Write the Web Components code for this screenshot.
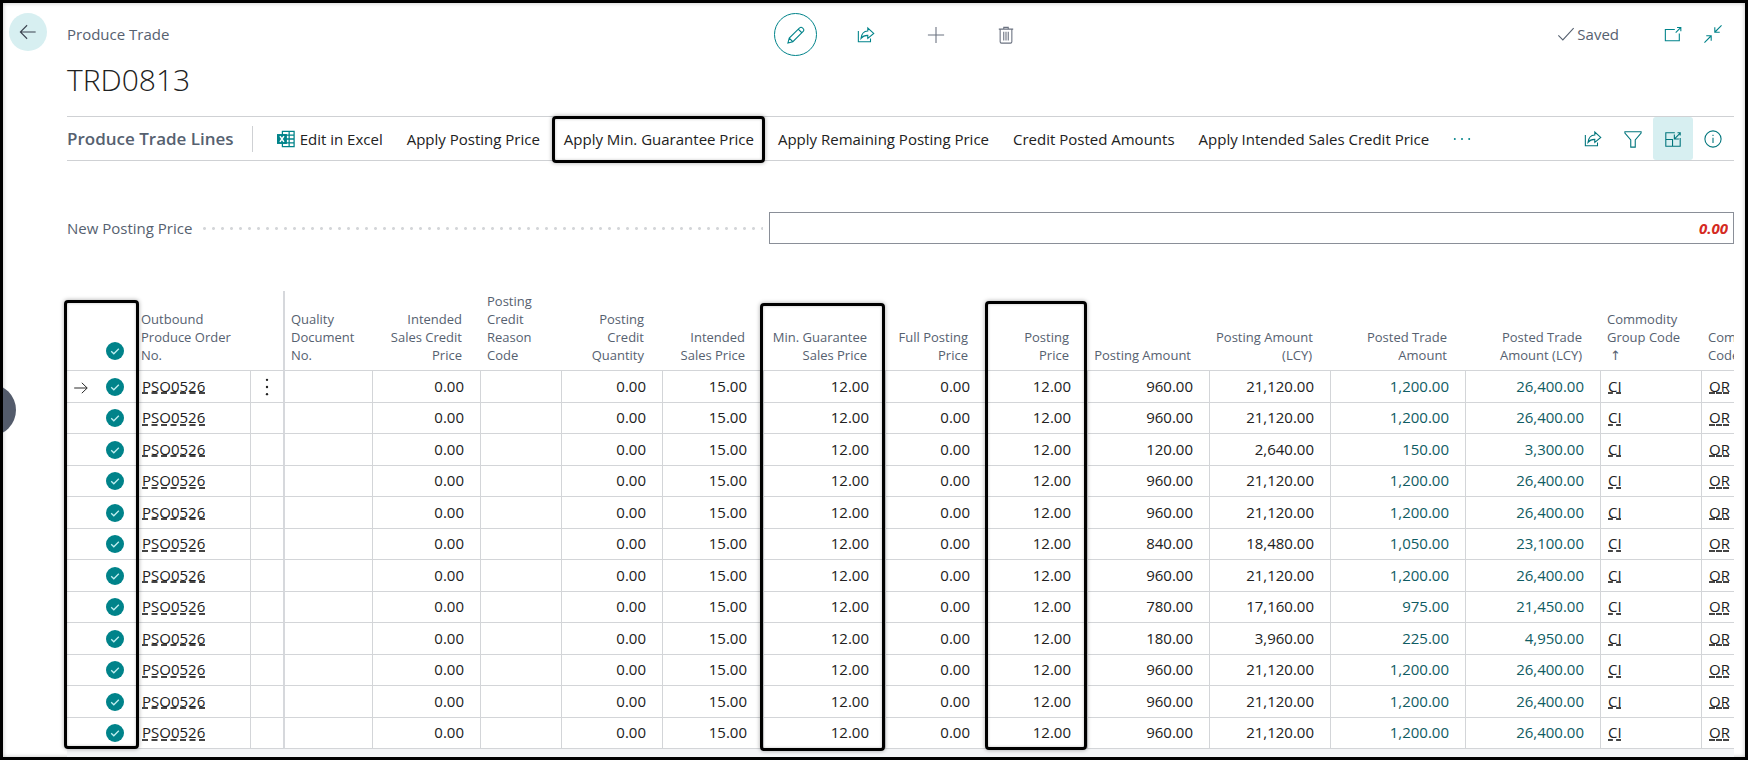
<!DOCTYPE html>
<html lang="en">
<head>
<meta charset="utf-8">
<meta name="viewport" content="width=device-width, initial-scale=1">
<title>Produce Trade - TRD0813</title>
<style>
  body { margin: 0; background: #fff; }
</style>
</head>
<body>
<trade-page>
  <page-header slot="header" caption="Produce Trade" record="TRD0813"></page-header>
  <lines-toolbar>Produce Trade Lines</lines-toolbar>
  <price-field value="0.00">New Posting Price</price-field>
  <lines-grid></lines-grid>
</trade-page>

<script>
const define = (name, html, setup) => {
  const template = document.createElement('template');
  template.innerHTML = html;
  customElements.define(name, class extends HTMLElement {
    connectedCallback() {
      if (this.shadowRoot) return;
      const root = this.attachShadow({ mode: 'open' });
      root.append(template.content.cloneNode(true));
      if (setup) setup.call(this, root);
    }
  });
};

const ICONS = {
  back: '<path d="M18.500 10H1.500M9 2.500 1.500 10 9 17.500"/>',
  pencil: '<path d="M1 19l1.500-5.500L14 2a2.200 2.200 0 0 1 3.200 0l.8.8a2.200 2.200 0 0 1 0 3.200L6.500 17.500zM2.500 13.500l4 4M12.500 3.500l4 4"/>',
  share: '<path d="M1.500 5.500v12h13.500v-3.500M4.500 13.800C5 8.500 8 5.800 12 5.600V2.200l6.600 6-6.600 5.600v-3.400C8.800 10.300 6.400 11.300 4.500 13.800z"/>',
  plus: '<path d="M10 1v18M1 10h18"/>',
  trash: '<path d="M2 3.500h16M7.500 3.300V1.500h5v1.800M3.500 3.500v14q0 1.500 1.500 1.500h10q1.500 0 1.500-1.500v-14M7.500 6.500v9.500M10 6.500v9.500M12.500 6.500v9.500"/>',
  check: '<path d="M1.500 11.500l5 5L18.500 3.500"/>',
  popout: '<path d="M12 5H1.500v12.500h15.500V9.500M13 8.500l5.500-5.500M14.500 2.800h4.200v4.200"/>',
  shrink: '<path d="M19.500.5l-7 7M12 2.500V8h5.500M.5 19.500l7-7M2.500 12H8v5.500"/>',
  filter: '<path d="M1 2h18v1.500l-6.500 7.500v8h-5v-8L1 3.500z"/>',
  focus: '<path d="M12 3H2v15h16V9M2 10.500h7.500v7.500M18.500 3l-6.500 6.500M11.500 5v5h5M15 3h3v3"/>',
  info: '<circle cx="10" cy="10" r="9"/><path d="M10 8.500v6M10 5.200v1.500"/>',
  arrow: '<path d="M1.500 10h16M11 3.500l6.800 6.500L11 16.500"/>',
  more: '<g fill="currentColor" stroke="none"><circle cx="2" cy="10" r="1.100"/><circle cx="10" cy="10" r="1.100"/><circle cx="18" cy="10" r="1.100"/></g>',
  dots: '<g fill="currentColor" stroke="none"><circle cx="10" cy="2" r="1.300"/><circle cx="10" cy="10" r="1.300"/><circle cx="10" cy="18" r="1.300"/></g>',
  excel: '<path d="M6 1.500h13v17H6zM6 5.800h13M6 10h13M6 14.200h13M13.500 1.500v17" stroke-width="1.400"/><path d="M0 4.500h11v11H0z" fill="currentColor" stroke="none"/><path d="M3.300 6.800l4.400 6.400M7.700 6.800l-4.400 6.400" stroke="#fff" stroke-width="1.700"/>'
};

define('line-icon', `
  <style>
    :host { display: inline-flex; flex: none; width: 18px; height: 18px; }
    svg { width: 100%; height: 100%; fill: none; stroke: currentColor; stroke-width: 1.200; overflow: visible; }
  </style>
  <svg viewBox="0 0 20 20" aria-hidden="true"></svg>`,
  function (root) {
    root.querySelector('svg').innerHTML = ICONS[this.getAttribute('name')];
  });

/* Heavy black outline that calls out a part of the page. */
define('call-out', `
  <style>
    :host {
      position: absolute; box-sizing: border-box; pointer-events: none;
      border: 3px solid #000; border-radius: 4px;
      box-shadow: 0 0 4px rgba(0,0,0,.35), inset 0 0 3px rgba(0,0,0,.25);
    }
  </style>`);

define('trade-page', `
  <style>
    :host {
      display: flex; flex-direction: column; position: relative; box-sizing: border-box;
      min-height: 100vh; overflow: hidden; border: 3px solid #000;
      padding: 10px 11px 0 6px; background: #fff;
      box-shadow: inset 0 0 4px rgba(0,0,0,.25);
      font: 15px/20px "Open Sans", "Noto Sans", sans-serif; color: #212121;
    }
    .body { display: flex; flex-direction: column; flex: 1; margin-left: 58px; min-width: 0; }
    .tab {
      position: absolute; left: -39px; top: 381px; width: 52px; height: 52px;
      border: 0; border-radius: 50%; background: #535b6b; padding: 0;
    }
  </style>
  <slot name="header"></slot>
  <main class="body"><slot></slot></main>
  <button class="tab" aria-label="Expand pane"></button>`);

define('page-header', `
  <style>
    :host { display: grid; grid-template-columns: 58px 1fr auto 1fr; height: 103px; color: #566170; }
    button { display: flex; align-items: center; justify-content: center; padding: 0; border: 0; background: none; color: #00838a; }
    .back { width: 38px; height: 38px; border-radius: 50%; background: #d7eff1; color: #3b4350; }
    .caption { padding-top: 11px; }
    h1 { margin: 16px 0 0; font-size: 30px; line-height: 40px; font-weight: 300; color: #212121; }
    .tools { display: flex; gap: 27px; height: 43px; }
    .tools button { width: 43px; height: 43px; }
    .tools button:first-child { border: 1px solid #00838a; border-radius: 50%; }
    .tools button.grey { color: #6b7280; }
    .state { display: flex; justify-content: flex-end; align-items: center; height: 42px; padding-right: 1px; }
    .saved { display: flex; align-items: center; gap: 2px; margin-right: 34px; }
    .state button { width: 40px; height: 40px; }
  </style>
  <button class="back" aria-label="Back"><line-icon name="back"></line-icon></button>
  <div><div class="caption"></div><h1></h1></div>
  <div class="tools">
    <button aria-label="Edit"><line-icon name="pencil"></line-icon></button>
    <button aria-label="Share"><line-icon name="share"></line-icon></button>
    <button class="grey" aria-label="New"><line-icon name="plus"></line-icon></button>
    <button class="grey" aria-label="Delete"><line-icon name="trash"></line-icon></button>
  </div>
  <div class="state">
    <span class="saved"><line-icon name="check"></line-icon><span>Saved</span></span>
    <button aria-label="Open in new window"><line-icon name="popout"></line-icon></button>
    <button aria-label="Collapse"><line-icon name="shrink"></line-icon></button>
  </div>`,
  function (root) {
    root.querySelector('.caption').textContent = this.getAttribute('caption');
    root.querySelector('h1').textContent = this.getAttribute('record');
  });

define('lines-toolbar', `
  <style>
    :host {
      display: flex; align-items: center; box-sizing: border-box; height: 45px;
      border: solid #cfd1d4; border-width: 1px 0;
    }
    h2 { margin: 0; padding-right: 18px; font-size: 17px; line-height: 26px; font-weight: 600; color: #566170; border-right: 1px solid #cfd1d4; white-space: nowrap; }
    .actions { display: flex; flex: 1; align-items: center; margin-left: 12px; min-width: 0; }
    button {
      position: relative; display: flex; align-items: center; gap: 5px; height: 43px; padding: 0 12px;
      border: 0; background: none; font: inherit; color: inherit; white-space: nowrap;
    }
    .actions line-icon { color: #00838a; }
    call-out { inset: -1px 1px -3px 0; }
    .views { display: flex; padding-right: 1px; color: #00757c; }
    .views button { width: 40px; padding: 0; justify-content: center; }
    .views button[aria-pressed] { background: #d7eff1; border-radius: 3px; }
  </style>
  <h2><slot></slot></h2>
  <div class="actions">
    <button><line-icon name="excel"></line-icon>Edit in Excel</button>
    <button>Apply Posting Price</button>
    <button>Apply Min. Guarantee Price<call-out></call-out></button>
    <button>Apply Remaining Posting Price</button>
    <button>Credit Posted Amounts</button>
    <button>Apply Intended Sales Credit Price</button>
    <button aria-label="More options"><line-icon name="more"></line-icon></button>
  </div>
  <div class="views">
    <button aria-label="Share"><line-icon name="share"></line-icon></button>
    <button aria-label="Filter"><line-icon name="filter"></line-icon></button>
    <button aria-label="Focus mode" aria-pressed="true"><line-icon name="focus"></line-icon></button>
    <button aria-label="Details"><line-icon name="info"></line-icon></button>
  </div>`);

define('price-field', `
  <style>
    :host { display: grid; grid-template-columns: 8fr 11fr; align-items: center; margin: 51px 0 47px; }
    label { display: flex; align-items: center; gap: 8px; padding-right: 6px; color: #566170; white-space: nowrap; }
    label::after { content: ""; flex: 1; height: 3px; background: radial-gradient(circle, #d4d6d9 1px, transparent 2px) 0 0 / 9px 3px; }
    input {
      box-sizing: border-box; width: 100%; height: 32px; padding: 0 5px; border: 1px solid #8a8f98; border-radius: 0;
      background: #fff; text-align: right; font: italic 700 15px/20px "Open Sans", "Noto Sans", sans-serif; color: #d42a22;
    }
  </style>
  <label for="price"><slot></slot></label>
  <input id="price" type="text">`,
  function (root) {
    root.querySelector('input').value = this.getAttribute('value');
  });

define('lines-grid', `
  <style>
    :host { display: block; position: relative; flex: 1; background: linear-gradient(#f4f5f7, #f4f5f7) bottom / 100% 9px no-repeat; }
    .scroll { overflow: hidden; }
    table { width: 1736px; table-layout: fixed; border-collapse: separate; border-spacing: 0; background: #fff; }
    th, td { box-sizing: border-box; padding: 0 16px 2px 7px; border-bottom: 1px solid #d3d5d8; text-align: right; white-space: nowrap; overflow: hidden; }
    th { height: 80px; padding: 0 19px 6px 6px; vertical-align: bottom; white-space: pre; font-size: 13px; line-height: 18px; font-weight: 400; color: #566170; }
    td { border-right: 1px solid #d3d5d8; }
    tbody tr:nth-child(odd) td { height: 32px; }
    tbody tr:nth-child(even) td { height: 31px; }
    .left { text-align: left; padding-right: 0; }
    .mark { padding: 0; text-align: center; vertical-align: middle; border-right: 0; }
    th.mark { vertical-align: bottom; padding-bottom: 10px; }
    .freeze { padding: 0; border-right: 2px solid #d6d8dc; text-align: center; }
    .posted { color: #0f5c63; }
    line-icon { vertical-align: middle; }
    .mark line-icon { width: 16px; height: 16px; }
    .freeze button { display: flex; width: 100%; justify-content: center; padding: 0; border: 0; background: none; color: inherit; }
    input {
      appearance: none; display: block; width: 18px; height: 18px; margin: 0 auto; border-radius: 50%;
      background: #00838a url("data:image/svg+xml,%3Csvg xmlns='http://www.w3.org/2000/svg' viewBox='0 0 18 18'%3E%3Cpath d='M5.200 9.300l2.600 2.500 5-5' fill='none' stroke='%23bfeef0' stroke-width='1.300'/%3E%3C/svg%3E") center / 18px;
    }
    a { color: inherit; text-decoration: underline dashed #444 2px; text-underline-offset: 1px; text-decoration-skip-ink: none; }
    .sorted { padding-left: 3px; font-family: "DejaVu Sans", sans-serif; line-height: 16px; }
    .picked { left: -3px; width: 75px; top: 9px; bottom: 8px; }
    .guarantee { left: 693px; width: 125px; top: 12px; bottom: 6px; }
    .posting { left: 918px; width: 102px; top: 10px; bottom: 7px; }
  </style>
  <div class="scroll">
    <table>
      <colgroup></colgroup>
      <thead><tr></tr></thead>
      <tbody></tbody>
    </table>
  </div>
  <call-out class="picked"></call-out>
  <call-out class="guarantee"></call-out>
  <call-out class="posting"></call-out>`,
  function (root) {
    const columns = [
      [28, '', 'mark'],
      [40, '<input type="checkbox" checked aria-label="Select all">', 'mark'],
      [116, 'Outbound\nProduce Order\nNo.', 'left'],
      [34, '', 'freeze'],
      [88, 'Quality\nDocument\nNo.', 'left'],
      [108, 'Intended\nSales Credit\nPrice', ''],
      [81, 'Posting\nCredit\nReason\nCode', 'left'],
      [101, 'Posting\nCredit\nQuantity', ''],
      [101, 'Intended\nSales Price', ''],
      [122, 'Min. Guarantee\nSales Price', ''],
      [101, 'Full Posting\nPrice', ''],
      [101, 'Posting\nPrice', ''],
      [122, 'Posting Amount', ''],
      [121, 'Posting Amount\n(LCY)', ''],
      [135, 'Posted Trade\nAmount', ''],
      [135, 'Posted Trade\nAmount (LCY)', ''],
      [101, 'Commodity\nGroup Code\n<span class="sorted">↑</span>', 'left'],
      [101, 'Commodity\nCode', 'left']
    ];
    const amounts = {
      a: ['960.00', '21,120.00', '1,200.00', '26,400.00'],
      b: ['120.00', '2,640.00', '150.00', '3,300.00'],
      c: ['840.00', '18,480.00', '1,050.00', '23,100.00'],
      d: ['780.00', '17,160.00', '975.00', '21,450.00'],
      e: ['180.00', '3,960.00', '225.00', '4,950.00']
    };
    root.querySelector('colgroup').innerHTML = columns.map(c => `<col style="width:${c[0]}px">`).join('');
    root.querySelector('thead tr').innerHTML = columns.map(c =>
      `<th scope="col" class="${c[2]}">${c[1]}</th>`).join('');
    root.querySelector('tbody').innerHTML = [...'aabaacadeaaa'].map((key, i) => {
      const [amount, lcy, posted, postedLcy] = amounts[key];
      const cells = [
        i ? '' : '<line-icon name="arrow"></line-icon>',
        `<input type="checkbox" checked aria-label="Select line ${i + 1}">`,
        '<a href="#order">PSO0526</a>',
        i ? '' : '<button aria-label="Show more options"><line-icon name="dots"></line-icon></button>',
        '', '0.00', '', '0.00', '15.00', '12.00', '0.00', '12.00',
        amount, lcy, posted, postedLcy,
        '<a href="#group">CI</a>', '<a href="#commodity">OR</a>'
      ];
      return '<tr>' + cells.map((cell, n) =>
        `<td class="${columns[n][2]}${n === 14 || n === 15 ? ' posted' : ''}">${cell}</td>`).join('') + '</tr>';
    }).join('');
  });
</script>
</body>
</html>
